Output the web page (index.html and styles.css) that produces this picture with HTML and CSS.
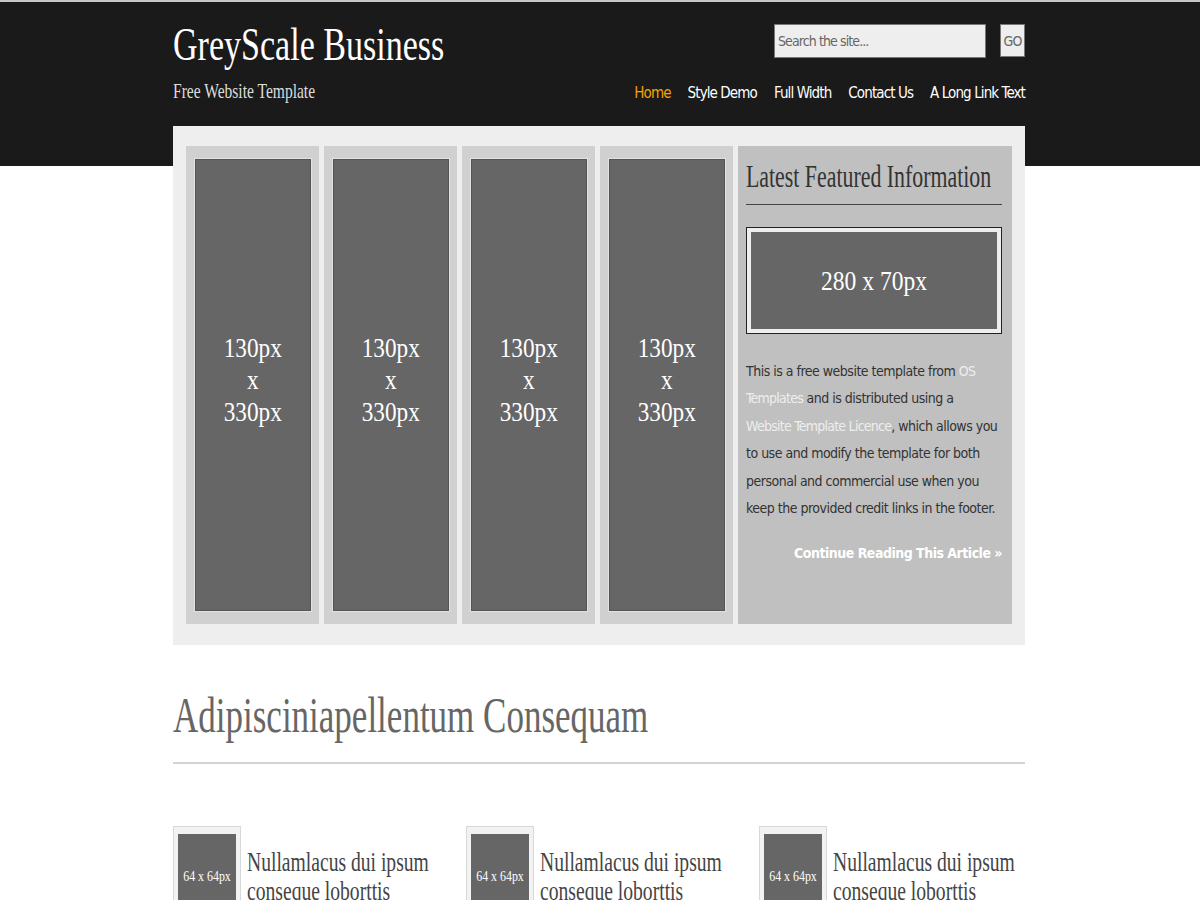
FILE: index.html
```html
<!DOCTYPE html>
<html>
<head>
<meta charset="utf-8">
<title>GreyScale Business</title>
<link rel="stylesheet" href="styles.css">
</head>
<body>
<div class="page">
  <header class="header">
    <div class="brand">
      <h1 class="logo"><span class="sx sx-logo">GreyScale Business</span></h1>
      <p class="tagline"><span class="sx sx-tag">Free Website Template</span></p>
    </div>
    <div class="header-right">
      <form class="search">
        <input class="search-input" type="text" placeholder="Search the site...">
        <button class="search-btn" type="button">GO</button>
      </form>
      <nav class="nav">
        <a class="nav-link active" href="#">Home</a>
        <a class="nav-link" href="#">Style Demo</a>
        <a class="nav-link" href="#">Full Width</a>
        <a class="nav-link" href="#">Contact Us</a>
        <a class="nav-link" href="#">A Long Link Text</a>
      </nav>
    </div>
  </header>

  <section class="featured">
    <div class="col"><div class="col-img"><span class="sx sx-col">130px<br>x<br>330px</span></div></div>
    <div class="col"><div class="col-img"><span class="sx sx-col">130px<br>x<br>330px</span></div></div>
    <div class="col"><div class="col-img"><span class="sx sx-col">130px<br>x<br>330px</span></div></div>
    <div class="col"><div class="col-img"><span class="sx sx-col">130px<br>x<br>330px</span></div></div>
    <div class="panel">
      <h2 class="panel-title"><span class="sx sx-ptitle">Latest Featured Information</span></h2>
      <div class="panel-img"><div class="panel-img-inner"><span class="sx sx-pimg">280 x 70px</span></div></div>
      <p class="panel-text">This is a free website template from <a href="#">OS Templates</a> and is distributed using a <a class="nowrap" href="#">Website Template Licence</a>, which allows you to use and modify the template for both personal and commercial use when you keep the provided credit links in the footer.</p>
      <p class="panel-more"><a href="#">Continue Reading This Article &raquo;</a></p>
    </div>
  </section>

  <section class="content">
    <h2 class="section-title"><span class="sx sx-section">Adipisciniapellentum Consequam</span></h2>
    <div class="cards">
      <div class="card">
        <div class="thumb"><div class="thumb-inner"><span class="sx sx-thumb">64 x 64px</span></div></div>
        <h3 class="card-title">Nullamlacus dui ipsum conseque loborttis</h3>
      </div>
      <div class="card">
        <div class="thumb"><div class="thumb-inner"><span class="sx sx-thumb">64 x 64px</span></div></div>
        <h3 class="card-title">Nullamlacus dui ipsum conseque loborttis</h3>
      </div>
      <div class="card">
        <div class="thumb"><div class="thumb-inner"><span class="sx sx-thumb">64 x 64px</span></div></div>
        <h3 class="card-title">Nullamlacus dui ipsum conseque loborttis</h3>
      </div>
    </div>
  </section>
</div>
</body>
</html>
```

FILE: styles.css
```css
html, body {
  margin: 0;
  padding: 0;
}
body {
  background: #fff;
  border-top: 2px solid #c8c8c8;
  font-family: "DejaVu Sans Condensed", "DejaVu Sans", sans-serif;
  color: #333;
}
.page {
  background: linear-gradient(to bottom, #1a1a1a 0, #1a1a1a 164px, #fff 164px);
}
.header,
.featured,
.content {
  width: 852px;
  margin-left: calc(50% - 427px);
}

/* condensed serif text (Georgia-like, narrow) */
.sx {
  display: inline-block;
  white-space: nowrap;
  transform-origin: left center;
}
.sx-logo { transform: scaleX(0.74); }
.sx-tag { transform: scaleX(0.74); }
.sx-ptitle { transform: scaleX(0.705); }
.sx-section { transform: scaleX(0.70); }
.sx-col { transform: scaleX(0.86); transform-origin: center center; text-align: center; }
.sx-pimg { transform: scaleX(0.84); transform-origin: center center; }
.sx-thumb { transform: scaleX(0.85); transform-origin: center center; }

.header {
  height: 124px;
  display: flex;
  justify-content: space-between;
  box-sizing: border-box;
  padding-top: 19px;
}
.logo {
  margin: 0;
  font-family: "Liberation Serif", serif;
  font-weight: normal;
  font-size: 46px;
  line-height: 48px;
  color: #fff;
}
.tagline {
  margin: 10px 0 0;
  font-family: "Liberation Serif", serif;
  font-size: 21px;
  line-height: 24px;
  color: #ddd;
}
.header-right {
  display: flex;
  flex-direction: column;
  align-items: flex-end;
}
.search {
  display: flex;
  gap: 14px;
  margin: 3px 0 0;
}
.search-input {
  width: 212px;
  height: 34px;
  box-sizing: border-box;
  background: #eee;
  border: 1px solid #777;
  padding: 0 3px;
  font-family: "DejaVu Sans Condensed", sans-serif;
  font-size: 14px;
  letter-spacing: -0.9px;
  color: #666;
}
.search-input::placeholder {
  color: #666;
}
.search-btn {
  width: 25px;
  height: 33px;
  box-sizing: border-box;
  background: #eee;
  border: 1px solid #777;
  padding: 0;
  font-family: "DejaVu Sans Condensed", sans-serif;
  font-size: 14px;
  letter-spacing: -0.8px;
  color: #666;
}
.nav {
  display: flex;
  gap: 17px;
  margin-top: 26px;
}
.nav-link {
  color: #fff;
  text-decoration: none;
  font-size: 15px;
  line-height: 18px;
  letter-spacing: -0.9px;
}
.nav-link.active {
  color: #f5a300;
}

.featured {
  box-sizing: border-box;
  background: #eee;
  padding: 20px 13px 21px 13px;
  display: flex;
  gap: 5px;
}
.col {
  width: 133px;
  flex: none;
  box-sizing: border-box;
  background: #d0d0d0;
  padding: 13px 8px 13px 9px;
}
.col-img {
  height: 452px;
  box-sizing: border-box;
  background: #666;
  border: 1px solid #555;
  box-shadow: 0 0 0 1px #e2e2e2;
  display: flex;
  align-items: center;
  justify-content: center;
  color: #fff;
  font-family: "Liberation Serif", serif;
  font-size: 27px;
  line-height: 32px;
  padding-bottom: 10px;
}
.panel {
  flex: 1;
  min-width: 0;
  background: #c0c0c0;
  padding: 13px 10px 8px 8px;
}
.panel-title {
  margin: 0;
  font-family: "Liberation Serif", serif;
  font-weight: normal;
  font-size: 31px;
  line-height: 36px;
  color: #333;
  border-bottom: 1px solid #444;
  padding-bottom: 9px;
}
.panel-img {
  margin-top: 22px;
  border: 1px solid #222;
  background: #eee;
  padding: 4px;
}
.panel-img-inner {
  height: 97px;
  background: #666;
  display: flex;
  align-items: center;
  justify-content: center;
  color: #fff;
  font-family: "Liberation Serif", serif;
  font-size: 28px;
}
.panel-text {
  margin: 24px -1px 0 0;
  font-size: 14px;
  line-height: 27.4px;
  letter-spacing: -0.5px;
  color: #333;
}
.panel-text a {
  color: #eee;
  text-decoration: none;
  letter-spacing: -0.75px;
}
.panel-text a.nowrap {
  white-space: nowrap;
}
.panel-more {
  margin: 18px 0 0;
  text-align: right;
  font-size: 14px;
  line-height: 27.4px;
  font-weight: bold;
  letter-spacing: -0.5px;
}
.panel-more a {
  color: #fff;
  text-decoration: none;
}

.content {
  padding-top: 42px;
}
.section-title {
  margin: 0;
  font-family: "Liberation Serif", serif;
  font-weight: normal;
  font-size: 50px;
  line-height: 56px;
  color: #666;
  border-bottom: 2px solid #d3d3d3;
  padding-bottom: 19px;
}
.cards {
  display: grid;
  grid-template-columns: 293px 293px minmax(0, 1fr);
  margin-top: 62px;
}
.card {
  display: flex;
  gap: 6px;
  align-items: flex-start;
}
.thumb {
  flex: none;
  border: 1px solid #d8d8d8;
  background: #f2f2f2;
  padding: 7px 4px 7px 4px;
}
.thumb-inner {
  width: 58px;
  height: 86px;
  background: #666;
  color: #fff;
  font-family: "Liberation Serif", serif;
  font-size: 14px;
  display: flex;
  align-items: center;
  justify-content: center;
}
.card-title {
  flex: none;
  width: 306px;
  margin: 21px 0 0;
  font-family: "Liberation Serif", serif;
  font-weight: normal;
  font-size: 28px;
  line-height: 29px;
  color: #444;
  transform: scaleX(0.7);
  transform-origin: left top;
}
```
